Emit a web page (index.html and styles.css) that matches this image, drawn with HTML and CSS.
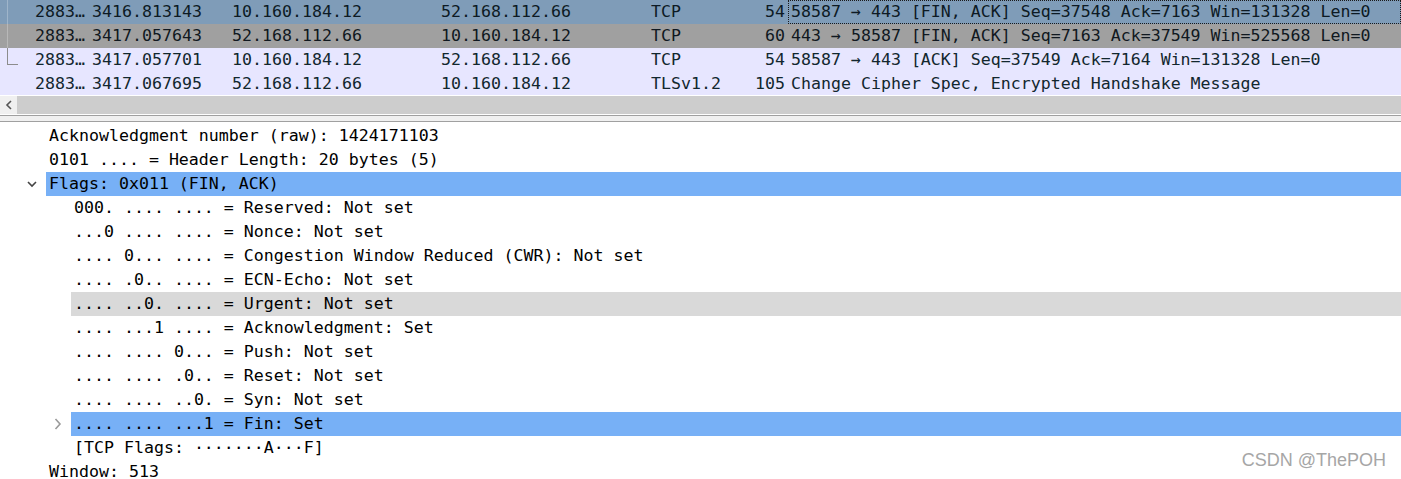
FILE: index.html
```html
<!DOCTYPE html>
<html>
<head>
<meta charset="utf-8">
<link rel="stylesheet" href="styles.css">
</head>
<body>
<div class="app">
  <div class="plist">
    <div class="prow sel">
      <div class="c no"><span class="tree-v"></span><span class="num">2883…</span></div>
      <div class="c">3416.813143</div>
      <div class="c">10.160.184.12</div>
      <div class="c">52.168.112.66</div>
      <div class="c">TCP</div>
      <div class="c len">54</div>
      <div class="c info focus">58587 → 443 [FIN, ACK] Seq=37548 Ack=7163 Win=131328 Len=0</div>
    </div>
    <div class="prow gray">
      <div class="c no"><span class="tree-v"></span><span class="num">2883…</span></div>
      <div class="c">3417.057643</div>
      <div class="c">52.168.112.66</div>
      <div class="c">10.160.184.12</div>
      <div class="c">TCP</div>
      <div class="c len">60</div>
      <div class="c info">443 → 58587 [FIN, ACK] Seq=7163 Ack=37549 Win=525568 Len=0</div>
    </div>
    <div class="prow tcp">
      <div class="c no"><span class="tree-l"></span><span class="num">2883…</span></div>
      <div class="c">3417.057701</div>
      <div class="c">10.160.184.12</div>
      <div class="c">52.168.112.66</div>
      <div class="c">TCP</div>
      <div class="c len">54</div>
      <div class="c info">58587 → 443 [ACK] Seq=37549 Ack=7164 Win=131328 Len=0</div>
    </div>
    <div class="prow tcp last">
      <div class="c no"><span class="tree-none"></span><span class="num">2883…</span></div>
      <div class="c">3417.067695</div>
      <div class="c">52.168.112.66</div>
      <div class="c">10.160.184.12</div>
      <div class="c">TLSv1.2</div>
      <div class="c len">105</div>
      <div class="c info">Change Cipher Spec, Encrypted Handshake Message</div>
    </div>
  </div>
  <div class="hscroll">
    <div class="arrow"><svg width="8" height="10" viewBox="0 0 8 10"><polyline points="6,1 2,5 6,9" fill="none" stroke="#555" stroke-width="1.6"/></svg></div>
    <div class="thumb"></div>
  </div>
  <div class="splitter"></div>
  <div class="details">
    <div class="drow l1"><span class="exp"></span><span class="txt">Acknowledgment number (raw): 1424171103</span></div>
    <div class="drow l1"><span class="exp"></span><span class="txt">0101 .... = Header Length: 20 bytes (5)</span></div>
    <div class="drow l1"><span class="exp"><svg class="down" width="10" height="7" viewBox="0 0 10 7"><polyline points="1,1 5,5 9,1" fill="none" stroke="#444" stroke-width="1.6"/></svg></span><span class="txt hl">Flags: 0x011 (FIN, ACK)</span></div>
    <div class="drow l2"><span class="exp"></span><span class="txt">000. .... .... = Reserved: Not set</span></div>
    <div class="drow l2"><span class="exp"></span><span class="txt">...0 .... .... = Nonce: Not set</span></div>
    <div class="drow l2"><span class="exp"></span><span class="txt">.... 0... .... = Congestion Window Reduced (CWR): Not set</span></div>
    <div class="drow l2"><span class="exp"></span><span class="txt">.... .0.. .... = ECN-Echo: Not set</span></div>
    <div class="drow l2"><span class="exp"></span><span class="txt hover">.... ..0. .... = Urgent: Not set</span></div>
    <div class="drow l2"><span class="exp"></span><span class="txt">.... ...1 .... = Acknowledgment: Set</span></div>
    <div class="drow l2"><span class="exp"></span><span class="txt">.... .... 0... = Push: Not set</span></div>
    <div class="drow l2"><span class="exp"></span><span class="txt">.... .... .0.. = Reset: Not set</span></div>
    <div class="drow l2"><span class="exp"></span><span class="txt">.... .... ..0. = Syn: Not set</span></div>
    <div class="drow l2"><span class="exp"><svg class="right" width="8" height="12" viewBox="0 0 8 12"><polyline points="1.5,1 6,6 1.5,11" fill="none" stroke="#9a9a9a" stroke-width="1.6"/></svg></span><span class="txt hl">.... .... ...1 = Fin: Set</span></div>
    <div class="drow l2"><span class="exp"></span><span class="txt">[TCP Flags: ·······A···F]</span></div>
    <div class="drow l1"><span class="exp"></span><span class="txt">Window: 513</span></div>
  </div>
  <div class="watermark">CSDN @ThePOH</div>
</div>
</body>
</html>
```

FILE: styles.css
```css
html, body {
  margin: 0;
  padding: 0;
  background: #ffffff;
}

.app {
  position: relative;
  width: 1401px;
  height: 479px;
  overflow: hidden;
  font-family: "DejaVu Sans Mono", "Liberation Mono", monospace;
  font-size: 16.6px;
  color: #000;
}

.plist {
  display: flex;
  flex-direction: column;
}

.prow {
  display: grid;
  grid-template-columns: 92px 140px 209px 210px 99px 38px 1fr;
  height: 24px;
  line-height: 24px;
  white-space: nowrap;
  color: #12272e;
}

.prow.last {
  height: 23px;
  line-height: 23px;
  border-bottom: 1px solid #ffffff;
}

.prow.sel { background: #7f9cb8; color: #0d1a24; }
.prow.gray { background: #a0a0a0; color: #101820; }
.prow.tcp { background: #e7e6ff; }

.c {
  overflow: hidden;
}

.no {
  display: flex;
  align-items: stretch;
}

.tree-v {
  width: 10px;
  margin-left: 7px;
  border-left: 1px solid rgba(255, 255, 255, 0.25);
  flex: none;
}

.tree-l {
  width: 10px;
  height: 16px;
  margin-left: 7px;
  border-left: 1px solid #8c8c8c;
  border-bottom: 1px solid #8c8c8c;
  flex: none;
}

.tree-none {
  width: 11px;
  margin-left: 7px;
  flex: none;
}

.num {
  margin-left: 17px;
}

.len {
  text-align: right;
  padding-right: 3px;
}

.info {
  padding-left: 3px;
}

.focus {
  outline: 1px dotted #1a1a1a;
  outline-offset: -1px;
}

.hscroll {
  display: flex;
  height: 18px;
}

.arrow {
  width: 17px;
  background: #f0f0f0;
  display: flex;
  align-items: center;
  justify-content: center;
}

.thumb {
  flex: 1;
  background: #cdcdcd;
}

.splitter {
  height: 6px;
  border-top: 1px solid #ffffff;
  border-bottom: 1px solid #a0a0a0;
  background: #f0f0f0;
  box-shadow: inset 0 1px 0 #a0a0a0;
  margin-bottom: 2px;
}

.details {
  display: flex;
  flex-direction: column;
}

.drow {
  display: flex;
  height: 24px;
  line-height: 24px;
  white-space: nowrap;
}

.exp {
  flex: none;
  position: relative;
  display: flex;
  align-items: center;
}

.l1 .exp { width: 46px; }
.l2 .exp { width: 71px; }

.l1 .exp svg { margin-left: 27px; }
.l2 .exp svg { margin-left: 54px; }

.txt {
  flex: 1;
  padding-left: 3px;
}

.txt.hl { background: #77b0f6; }
.txt.hover { background: #d9d9d9; }

.watermark {
  position: absolute;
  right: 15px;
  bottom: 8px;
  font-family: "Liberation Sans", Arial, sans-serif;
  font-size: 18px;
  color: #a6a6a6;
  text-shadow: 0 0 1px #ffffff;
}
```
